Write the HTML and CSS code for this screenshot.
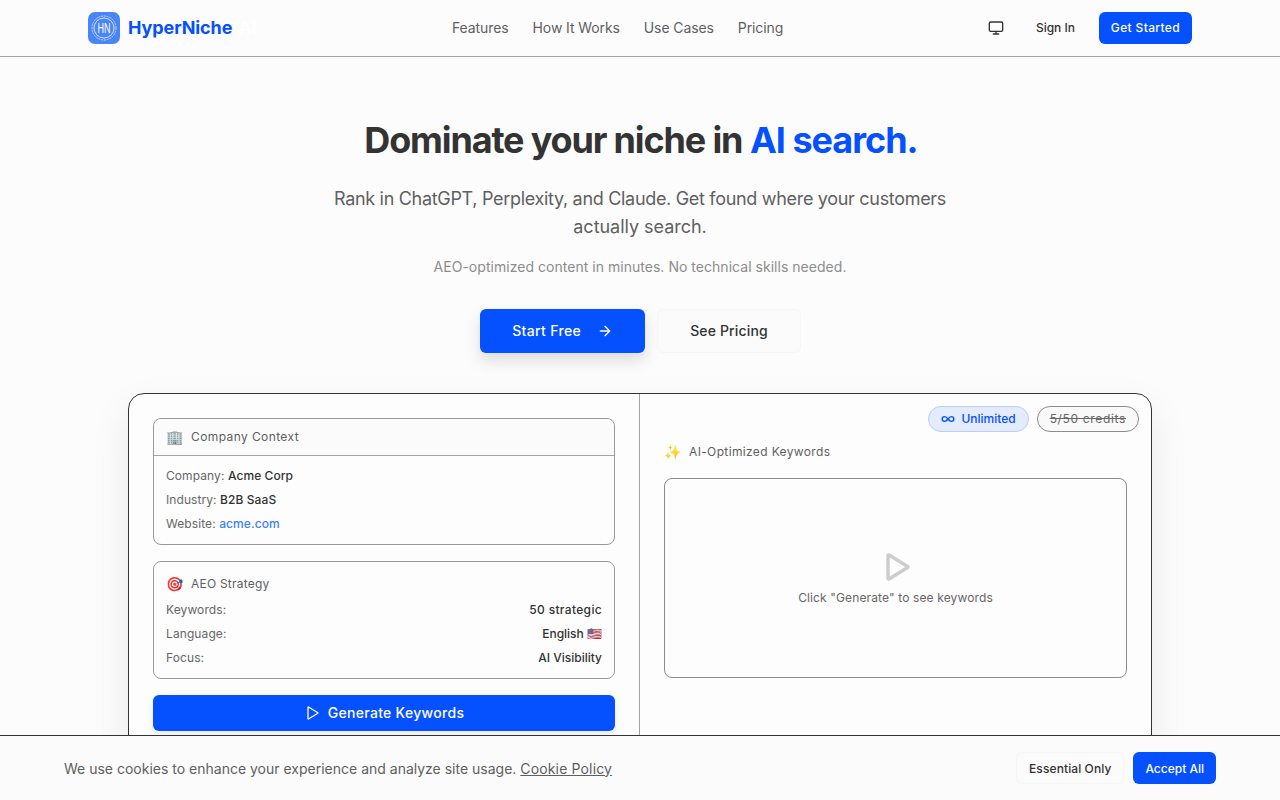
FILE: index.html
```html
<!DOCTYPE html>
<html lang="en">
<head>
<meta charset="utf-8">
<title>HyperNiche AI</title>
<link rel="stylesheet" href="styles.css">
</head>
<body>
<header class="nav">
  <div class="nav-inner">
    <a class="brand" href="#">
      <span class="logo">
        <svg viewBox="0 0 32 32" width="32" height="32">
          <rect width="32" height="32" rx="7" fill="#4a85f8"/>
          <circle cx="16" cy="16" r="12" fill="none" stroke="#c9dbfd" stroke-width=".9" stroke-dasharray="2 .8"/>
          <circle cx="16" cy="16" r="10" fill="none" stroke="#e4edfe" stroke-width=".9"/>
          <text x="16" y="21" text-anchor="middle" textLength="13" lengthAdjust="spacingAndGlyphs" class="logo-text">HN</text>
        </svg>
      </span>
      <span class="brand-name">HyperNiche</span>
      <span class="brand-ai">AI</span>
    </a>
    <nav class="links">
      <a href="#">Features</a>
      <a href="#">How It Works</a>
      <a href="#">Use Cases</a>
      <a href="#">Pricing</a>
    </nav>
    <div class="actions">
      <svg class="monitor" viewBox="0 0 24 24" width="16" height="16" fill="none" stroke="#333" stroke-width="2" stroke-linecap="round" stroke-linejoin="round"><rect x="2" y="3" width="20" height="14" rx="2"/><path d="M8 21h8M12 17v4"/></svg>
      <a class="signin" href="#">Sign In</a>
      <a class="btn-small btn-started" href="#">Get Started</a>
    </div>
  </div>
</header>

<main class="hero">
  <h1><span class="lead">Dominate your niche in</span> <span class="accent">AI search.</span></h1>
  <p class="sub">Rank in ChatGPT, Perplexity, and Claude. Get found where your customers <span class="sub-end">actually search.</span></p>
  <p class="note">AEO-optimized content in minutes. No technical skills needed.</p>
  <div class="cta">
    <a class="btn-primary" href="#">Start Free
      <svg viewBox="0 0 24 24" width="16" height="16" fill="none" stroke="#fff" stroke-width="2" stroke-linecap="round" stroke-linejoin="round"><path d="M5 12h14M12 5l7 7-7 7"/></svg>
    </a>
    <a class="btn-ghost" href="#">See Pricing</a>
  </div>

  <section class="demo">
    <div class="col-left">
      <div class="panel">
        <div class="panel-head"><span class="emoji">🏢</span>Company Context</div>
        <div class="panel-body">
          <div>Company: <b>Acme Corp</b></div>
          <div>Industry: <b>B2B SaaS</b></div>
          <div>Website: <a class="site" href="#">acme.com</a></div>
        </div>
      </div>
      <div class="panel strategy">
        <div class="strategy-head"><span class="emoji">🎯</span>AEO Strategy</div>
        <div class="row"><span>Keywords:</span><b class="wide">50 strategic</b></div>
        <div class="row"><span>Language:</span><b>English 🇺🇸</b></div>
        <div class="row"><span>Focus:</span><b>AI Visibility</b></div>
      </div>
      <a class="btn-generate" href="#">
        <svg viewBox="0 0 24 24" width="16" height="16" fill="none" stroke="#fff" stroke-width="2" stroke-linecap="round" stroke-linejoin="round"><path d="M6 3.500v17a.5.5 0 0 0 .76.43l14-8.500a.5.5 0 0 0 0-.86l-14-8.500A.5.5 0 0 0 6 3.500z"/></svg>
        Generate Keywords
      </a>
    </div>
    <div class="col-right">
      <div class="pills">
        <span class="pill pill-blue">
          <svg viewBox="0 0 24 24" width="14" height="14" fill="none" stroke="#0550ff" stroke-width="2.400" stroke-linecap="round"><path d="M12 12c-2-2.700-4-4-6-4a4 4 0 0 0 0 8c2 0 4-1.300 6-4zm0 0c2 2.700 4 4 6 4a4 4 0 0 0 0-8c-2 0-4 1.300-6 4z"/></svg>
          Unlimited
        </span>
        <span class="pill pill-gray">5/50 credits</span>
      </div>
      <div class="right-title"><span class="emoji">✨</span>AI-Optimized Keywords</div>
      <div class="empty">
        <svg viewBox="0 0 24 24" width="32" height="32" fill="none" stroke="#cdcdcd" stroke-width="2.600" stroke-linecap="round" stroke-linejoin="round"><path d="M6 3.500v17a.5.5 0 0 0 .76.43l14-8.500a.5.5 0 0 0 0-.86l-14-8.500A.5.5 0 0 0 6 3.500z"/></svg>
        <p>Click "Generate" to see keywords</p>
      </div>
    </div>
  </section>
</main>

<aside class="cookie">
  <p>We use cookies to enhance your experience and analyze site usage. <a href="#">Cookie Policy</a></p>
  <div class="cookie-actions">
    <a class="btn-essential" href="#">Essential Only</a>
    <a class="btn-small btn-accept" href="#">Accept All</a>
  </div>
</aside>
</body>
</html>
```
FILE: styles.css
```css
* { box-sizing: border-box; }
html, body { margin: 0; height: 800px; overflow: hidden; }
body {
  background: #fcfcfc;
  color: #333;
  font-family: Inter, "Liberation Sans", sans-serif;
  font-size: 12px;
}
a { text-decoration: none; color: inherit; }
p { margin: 0; }

.nav { height: 57px; border-bottom: 1px solid #a3a3a3; }
.nav-inner {
  max-width: 1104px; height: 56px; margin: 0 auto;
  display: grid; grid-template-columns: 364px auto 1fr; align-items: center;
}
.brand { display: flex; align-items: center; }
.logo { width: 32px; height: 32px; display: block; }
.logo svg { display: block; }
.logo-text { font-family: "Liberation Sans", sans-serif; font-size: 15px; fill: #fff; }
.brand-name { margin-left: 8px; padding-bottom: 1px; color: #0550ff; font-size: 18px; font-weight: 700; letter-spacing: -.1px; }
.brand-ai { margin-left: 6px; padding-bottom: 1px; color: #fff; font-size: 18px; font-weight: 700; }
.links { display: flex; gap: 24px; padding-bottom: 2px; font-size: 14px; letter-spacing: -.1px; color: #5f5f5f; }
.actions { display: flex; align-items: center; justify-content: flex-end; }
.monitor { margin-right: 32px; }
.signin { margin-right: 24px; padding-bottom: 1px; font-size: 12px; font-weight: 500; letter-spacing: -.05px; color: #333; }
.btn-small {
  display: flex; align-items: center; height: 32px; padding: 0 12px 1px;
  background: #0550ff; color: #fff; border-radius: 6px;
  font-size: 12px; font-weight: 500;
}
.btn-started { letter-spacing: .35px; }
.btn-accept { padding-bottom: 0; }

.hero { display: flex; flex-direction: column; align-items: center; text-align: center; }
h1 { margin: 61px 0 0; padding-left: 2px; font-size: 36px; line-height: 44px; font-weight: 700; letter-spacing: -.9px; color: #333; }
.lead { letter-spacing: -1.16px; }
.accent { color: #0550ff; letter-spacing: -1px; }
.sub { margin-top: 23px; width: 672px; padding: 0 16px; font-size: 18px; line-height: 28px; letter-spacing: -.31px; color: #5f5f5f; }
.sub-end { letter-spacing: -.03px; }
.note { margin-top: 16px; font-size: 14px; line-height: 20px; letter-spacing: .03px; color: #8c8c8c; }
.cta { display: flex; gap: 12px; margin-top: 32px; padding-left: 1px; }
.btn-primary {
  display: flex; align-items: center; gap: 16px; height: 44px; padding: 0 32px 1px;
  background: #0550ff; color: #fff; border-radius: 6px;
  font-size: 14px; font-weight: 500; letter-spacing: .35px;
  box-shadow: 0 8px 16px rgba(0, 0, 0, .13);
}
.btn-ghost {
  display: flex; align-items: center; height: 44px; padding: 0 32px 1px;
  border: 1px solid #f6f6f6; border-radius: 6px; background: #fbfbfb;
  font-size: 14px; font-weight: 500; letter-spacing: .15px; color: #333;
}

.demo {
  width: 1024px; margin-top: 40px; display: grid; grid-template-columns: 1fr 1fr;
  text-align: left; background: #fdfdfd;
  border: 1px solid #333; border-radius: 16px;
  box-shadow: 0 16px 40px rgba(0, 0, 0, .08);
}
.col-left { padding: 24px; border-right: 1px solid #a3a3a3; display: flex; flex-direction: column; gap: 16px; height: 420px; }
.col-right { padding: 24px; position: relative; }

.panel { border: 1px solid #999; border-radius: 8px; background: #fdfdfd; }
.panel-head {
  display: flex; align-items: center; height: 37px; padding: 0 12px 1px;
  background: #fbfbfb; border-bottom: 1px solid #a3a3a3; border-radius: 8px 8px 0 0;
  color: #5f5f5f; font-weight: 400; letter-spacing: .4px;
}
.emoji { width: 17px; margin-right: 8px; font-size: 14px; letter-spacing: 0; font-family: "Noto Color Emoji", Inter, sans-serif; }
.panel-body { padding: 8px 12px; color: #666; letter-spacing: .08px; }
.panel-body div { line-height: 24px; }
.panel-body b, .row b { font-weight: 500; color: #333; }
.site { color: #3b82f6; font-weight: 500; }
.strategy { padding: 12px 12px 8px; }
.strategy-head { display: flex; align-items: center; height: 20px; margin-bottom: 4px; padding-bottom: 1px; color: #5f5f5f; font-weight: 400; letter-spacing: .22px; }
.row { display: flex; justify-content: space-between; line-height: 24px; color: #666; letter-spacing: .1px; }
.row b { letter-spacing: 0; }
.row .wide { letter-spacing: .33px; }
.btn-generate {
  display: flex; align-items: center; justify-content: center; gap: 8px; height: 36px; padding-bottom: 1px;
  background: #0550ff; color: #fff; border-radius: 6px; font-size: 14px; font-weight: 500; letter-spacing: .3px;
  box-shadow: 0 4px 8px rgba(0, 0, 0, .08);
}

.pills { position: absolute; top: 12px; right: 12px; display: flex; gap: 8px; }
.pill {
  display: flex; align-items: center; gap: 6px; height: 26px; padding: 0 12px 1px;
  border-radius: 13px; font-size: 12px; font-weight: 500;
}
.pill-blue { background: #e3ebfd; border: 1px solid #b7cdfd; color: #0550ff; }
.pill-gray { background: #f9f9f9; border: 1px solid #8c8c8c; color: #666; font-weight: 400; letter-spacing: .66px; text-decoration: line-through; }
.right-title { display: flex; align-items: center; height: 20px; margin-top: 24px; padding-bottom: 1px; color: #5f5f5f; font-weight: 400; letter-spacing: .36px; }
.empty {
  height: 200px; margin-top: 16px; border: 1px solid #8c8c8c; border-radius: 8px;
  display: flex; flex-direction: column; align-items: center; justify-content: center; gap: 7px;
  color: #666; letter-spacing: .13px;
}

.cookie {
  position: fixed; left: 0; right: 0; bottom: 0; height: 65px;
  display: flex; align-items: center; justify-content: space-between; padding: 0 64px;
  background: #fbfbfb; border-top: 1px solid #333;
}
.cookie p { font-size: 14px; color: #5f5f5f; }
.cookie p a { letter-spacing: .15px; text-decoration: underline; }
.cookie-actions { display: flex; gap: 9px; }
.btn-essential {
  display: flex; align-items: center; height: 32px; padding: 0 12px;
  border: 1px solid #f6f6f6; border-radius: 6px;
  font-size: 12px; font-weight: 500; letter-spacing: .1px; color: #333;
}
```
